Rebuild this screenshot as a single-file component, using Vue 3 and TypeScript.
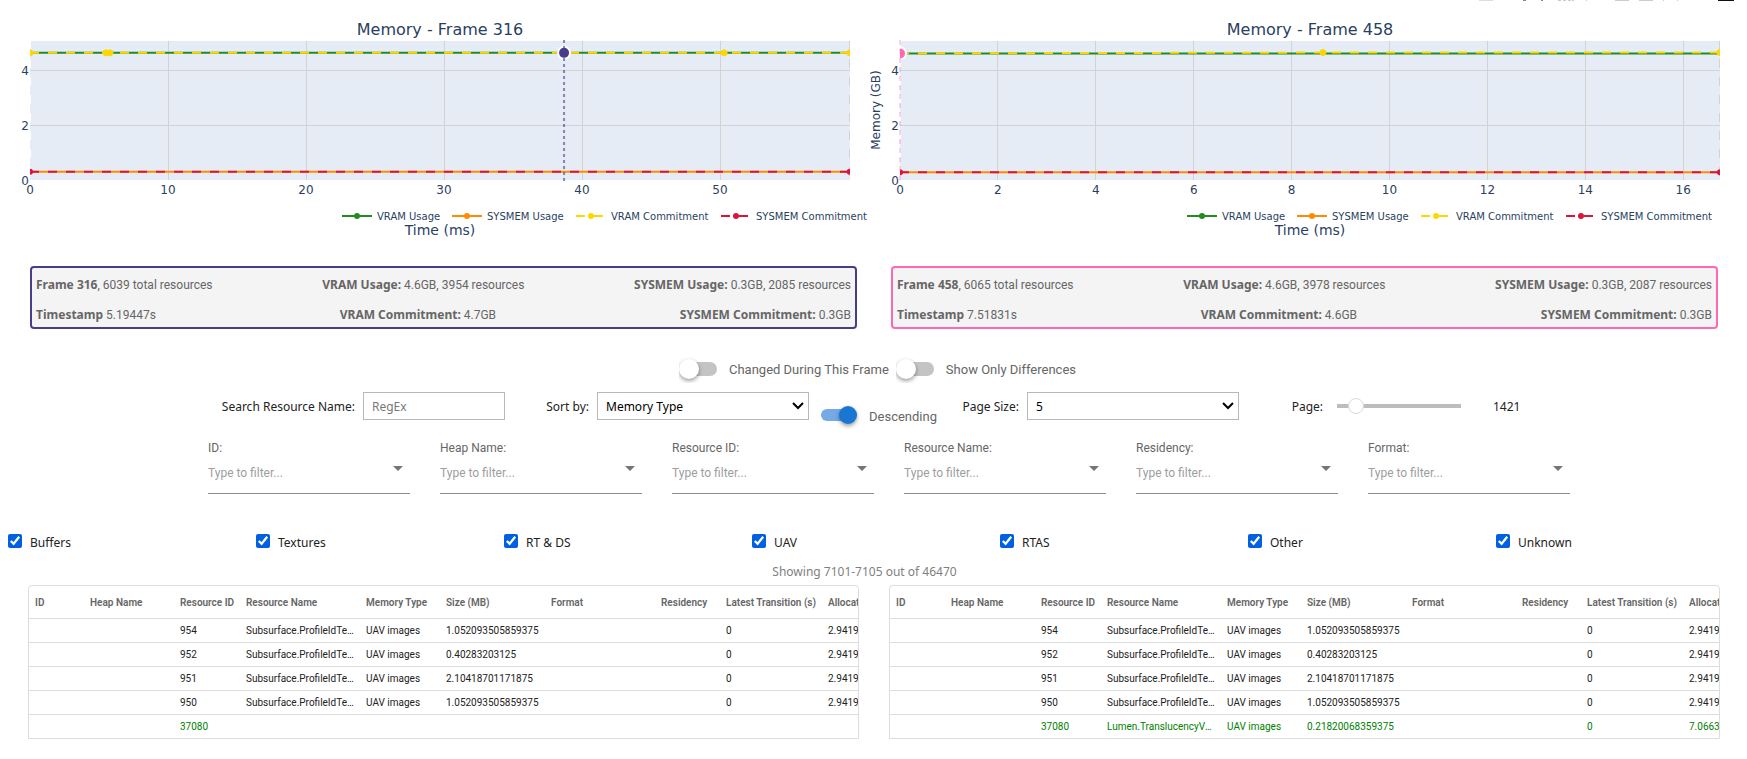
<script setup lang="ts">
import { ref } from 'vue'

interface Chart {
  id: string
  title: string
  origin: number
  pxPerUnit: number
  ticks: number[]
  span: number
  vram: [number, number]
  sysmem: number
  commitPoints: number[]
  selected: number
  color: string
  dash: string
  showYTitle: boolean
  legendX: number
}

const PLOT = { left: 30, right: 850, top: 41, bottom: 180 }
const yOf = (gb: number) => PLOT.bottom - gb * 27.4

const charts: Chart[] = [
  {
    id: 'left', title: 'Memory - Frame 316', origin: 30, pxPerUnit: 13.8, span: 59.4,
    ticks: [0, 10, 20, 30, 40, 50], vram: [4.64, 4.64], sysmem: 0.3,
    commitPoints: [0, 5.5, 5.8, 50.3, 59.4], selected: 38.7,
    color: '#483d8b', dash: '3 3', showYTitle: false, legendX: 342,
  },
  {
    id: 'right', title: 'Memory - Frame 458', origin: 30, pxPerUnit: 48.95, span: 16.75,
    ticks: [0, 2, 4, 6, 8, 10, 12, 14, 16], vram: [4.62, 4.65], sysmem: 0.28,
    commitPoints: [8.64, 16.75], selected: 0,
    color: '#ff69b4', dash: '5 4', showYTitle: true, legendX: 317,
  },
]
const xOf = (c: Chart, v: number) => c.origin + v * c.pxPerUnit
const commitY = (c: Chart, v: number) =>
  yOf(c.vram[0] + (c.vram[1] - c.vram[0]) * Math.min(1, v / (c.span * 0.5)))

const legend = [
  { label: 'VRAM Usage', color: '#228b22', dx: 0, dashed: false },
  { label: 'SYSMEM Usage', color: '#ff8c00', dx: 110, dashed: false },
  { label: 'VRAM Commitment', color: '#ffd700', dx: 234, dashed: true },
  { label: 'SYSMEM Commitment', color: '#dc143c', dx: 379, dashed: true },
]

const frames = [
  {
    cls: 'frame-a', no: '316', total: '6039', vram: '4.6GB, 3954 resources', sys: '0.3GB, 2085 resources',
    ts: '5.19447s', vramC: '4.7GB', sysC: '0.3GB',
  },
  {
    cls: 'frame-b', no: '458', total: '6065', vram: '4.6GB, 3978 resources', sys: '0.3GB, 2087 resources',
    ts: '7.51831s', vramC: '4.6GB', sysC: '0.3GB',
  },
]

const changed = ref(false)
const onlyDiff = ref(false)
const descending = ref(true)
const search = ref('')
const sortBy = ref('Memory Type')
const pageSize = ref('5')
const page = ref(1421)

const filters = ['ID', 'Heap Name', 'Resource ID', 'Resource Name', 'Residency', 'Format']
const kinds = ref(
  ['Buffers', 'Textures', 'RT & DS', 'UAV', 'RTAS', 'Other', 'Unknown'].map((name) => ({ name, on: true })),
)

const columns = [
  'ID', 'Heap Name', 'Resource ID', 'Resource Name', 'Memory Type', 'Size (MB)',
  'Format', 'Residency', 'Latest Transition (s)', 'Allocation Time (s)',
]
interface Row { cells: string[]; added?: boolean }
const profile = (id: string, size: string): Row => ({
  cells: ['', '', id, 'Subsurface.ProfileIdTexture', 'UAV images', size, '', '', '0', '2.94190'],
})
const common: Row[] = [
  profile('954', '1.052093505859375'),
  profile('952', '0.40283203125'),
  profile('951', '2.10418701171875'),
  profile('950', '1.052093505859375'),
]
const tables: Row[][] = [
  [...common, { added: true, cells: ['', '', '37080', '', '', '', '', '', '', ''] }],
  [...common, {
    added: true,
    cells: ['', '', '37080', 'Lumen.TranslucencyVolume', 'UAV images', '0.21820068359375', '', '', '0', '7.06630'],
  }],
]
</script>

<template>
  <main class="page">
    <section class="charts">
      <svg v-for="c in charts" :key="c.id" class="chart" viewBox="0 0 870 250" role="img" :aria-label="c.title">
        <defs>
          <clipPath :id="`plot-${c.id}`">
            <rect :x="PLOT.left" y="30" :width="PLOT.right - PLOT.left" height="150" />
          </clipPath>
        </defs>
        <rect :x="PLOT.left" :y="PLOT.top" :width="PLOT.right - PLOT.left" :height="PLOT.bottom - PLOT.top" fill="#e5ecf6" />
        <g class="grid">
          <line v-for="t in c.ticks.slice(1)" :key="t" :x1="xOf(c, t)" :x2="xOf(c, t)" :y1="PLOT.top" :y2="PLOT.bottom" />
          <line v-for="g in [2, 4]" :key="`g${g}`" :x1="PLOT.left" :x2="PLOT.right" :y1="yOf(g)" :y2="yOf(g)" />
        </g>

        <g :clip-path="`url(#plot-${c.id})`" fill="none" stroke-width="2">
          <line :x1="PLOT.left" :x2="PLOT.left" :y1="PLOT.top" :y2="PLOT.bottom" stroke="#fff" stroke-dasharray="9 9" />
          <line :x1="PLOT.right" :x2="PLOT.right" :y1="PLOT.top" :y2="PLOT.bottom" stroke="#d3d3d3" stroke-dasharray="9 9" />
          <line :x1="PLOT.left" :x2="PLOT.right" :y1="yOf(c.vram[0])" :y2="yOf(c.vram[0])" stroke="#228b22" />
          <line :x1="PLOT.left" :x2="PLOT.right" :y1="yOf(c.sysmem)" :y2="yOf(c.sysmem)" stroke="#ff8c00" />
          <polyline
            :points="`${PLOT.left},${yOf(c.vram[0])} ${xOf(c, c.span / 2)},${yOf(c.vram[1])} ${PLOT.right},${yOf(c.vram[1])}`"
            stroke="#ffd700" stroke-dasharray="9 9"
          />
          <line :x1="PLOT.left" :x2="PLOT.right" :y1="yOf(c.sysmem)" :y2="yOf(c.sysmem)" stroke="#dc143c" stroke-dasharray="9 9" />
          <circle v-for="p in c.commitPoints" :key="p" :cx="xOf(c, p)" :cy="commitY(c, p)" r="3" fill="#ffd700" stroke="#ffd700" stroke-width="1" />
          <circle v-for="p in [0, c.span]" :key="`s${p}`" :cx="xOf(c, p)" :cy="yOf(c.sysmem)" r="3" fill="#dc143c" />
          <circle :cx="xOf(c, c.selected)" :cy="yOf(c.vram[0])" r="6" :fill="c.color" stroke="#fff" />
        </g>
        <line
          :x1="xOf(c, c.selected)" :x2="xOf(c, c.selected)" y1="40" y2="181"
          :stroke="c.color" :stroke-width="c.selected ? 2 : 1" :stroke-dasharray="c.dash" opacity="0.6"
        />

        <g class="label">
          <text x="440" y="35" font-size="16" text-anchor="middle">{{ c.title }}</text>
          <text v-for="t in c.ticks" :key="t" :x="xOf(c, t)" y="194" font-size="12" text-anchor="middle">{{ t }}</text>
          <text v-for="t in [0, 2, 4]" :key="`y${t}`" x="29" :y="yOf(t) + 5" font-size="12" text-anchor="end">{{ t }}</text>
          <text v-if="c.showYTitle" transform="translate(10 110) rotate(-90)" font-size="12" text-anchor="middle">Memory (GB)</text>
          <text x="440" y="235" font-size="14" text-anchor="middle">Time (ms)</text>
          <g v-for="l in legend" :key="l.label" :transform="`translate(${c.legendX + l.dx} 216)`">
            <line x2="30" :stroke="l.color" stroke-width="2" :stroke-dasharray="l.dashed ? '9 9' : undefined" />
            <circle cx="15" r="3" :fill="l.color" />
            <text x="35" y="4" font-size="10">{{ l.label }}</text>
          </g>
        </g>
      </svg>
      <svg class="toolbar-edge" viewBox="0 0 260 1" aria-hidden="true">
        <path d="M0 0h14v1h-14z" fill="#ddd" />
        <path d="M44 0h3v1h-3z M62 0h2v1h-2z" fill="#888" />
        <path d="M79 0h3v1h-3z M84 0h3v1h-3z M89 0h3v1h-3z M93 0h2v1h-2z M107 0h1v1h-1z" fill="#ccc" />
        <path d="M136 0h14v1h-14z M160 0h14v1h-14z M184 0h1v1h-1z M198 0h1v1h-1z" fill="#ccc" />
        <path d="M239 0h16v1h-16z" fill="#111" />
      </svg>
    </section>

    <section class="pair summaries">
      <div v-for="f in frames" :key="f.no" class="summary" :class="f.cls">
        <div class="summary-row">
          <span><b>Frame {{ f.no }}</b>, {{ f.total }} total resources</span>
          <span><b>VRAM Usage:</b> {{ f.vram }}</span>
          <span><b>SYSMEM Usage:</b> {{ f.sys }}</span>
        </div>
        <div class="summary-row">
          <span><b>Timestamp</b> {{ f.ts }}</span>
          <span><b>VRAM Commitment:</b> {{ f.vramC }}</span>
          <span><b>SYSMEM Commitment:</b> {{ f.sysC }}</span>
        </div>
      </div>
    </section>

    <section class="toggles">
      <label class="switch"><input v-model="changed" type="checkbox" role="switch" /><span>Changed During This Frame</span></label>
      <label class="switch"><input v-model="onlyDiff" type="checkbox" role="switch" /><span>Show Only Differences</span></label>
    </section>

    <section class="controls">
      <label class="caption search-caption" for="search">Search Resource Name:</label>
      <input id="search" v-model="search" class="box search" type="text" placeholder="RegEx" />
      <label class="caption sort-caption" for="sort">Sort by:</label>
      <span class="select">
        <select id="sort" v-model="sortBy" class="box">
          <option>Memory Type</option>
          <option>Resource Name</option>
          <option>Size (MB)</option>
        </select>
        <svg viewBox="0 0 12 8" aria-hidden="true"><path d="M1 1l5 5 5-5" /></svg>
      </span>
      <label class="switch order"><input v-model="descending" type="checkbox" role="switch" /><span>Descending</span></label>
      <label class="caption size-caption" for="size">Page Size:</label>
      <span class="select">
        <select id="size" v-model="pageSize" class="box">
          <option>5</option>
          <option>10</option>
          <option>20</option>
        </select>
        <svg viewBox="0 0 12 8" aria-hidden="true"><path d="M1 1l5 5 5-5" /></svg>
      </span>
      <label class="caption page-caption" for="page">Page:</label>
      <input id="page" v-model.number="page" class="slider" type="range" min="0" max="9294" />
      <output class="caption" for="page">{{ page }}</output>
    </section>

    <section class="filters">
      <div v-for="(f, i) in filters" :key="f" class="filter">
        <label :for="`filter-${i}`">{{ f }}:</label>
        <div class="combo">
          <input :id="`filter-${i}`" type="text" placeholder="Type to filter..." />
          <svg viewBox="0 0 10 5" aria-hidden="true"><path d="M0 0h10l-5 5z" /></svg>
        </div>
      </div>
    </section>

    <section class="kinds">
      <label v-for="k in kinds" :key="k.name"><input v-model="k.on" type="checkbox" /><span>{{ k.name }}</span></label>
    </section>

    <p class="count">Showing 7101-7105 out of 46470</p>

    <section class="pair">
      <div v-for="(rows, i) in tables" :key="i" class="table-wrap">
        <table>
          <colgroup><col v-for="(c, n) in columns" :key="c" :class="`col-${n}`" /></colgroup>
          <thead>
            <tr><th v-for="c in columns" :key="c" scope="col">{{ c }}</th></tr>
          </thead>
          <tbody>
            <tr v-for="(r, n) in rows" :key="n" :class="{ added: r.added }">
              <td v-for="(cell, m) in r.cells" :key="m">{{ cell }}</td>
            </tr>
          </tbody>
        </table>
      </div>
    </section>
  </main>
</template>

<style>
body {
  margin: 0;
  background: #fff;
}
</style>

<style scoped>
* {
  box-sizing: border-box;
}
.page {
  font-family: "Noto Sans", "Segoe UI", sans-serif;
  font-size: 12px;
  color: #222;
  overflow: hidden;
}
.charts {
  display: grid;
  grid-template-columns: 1fr 1fr;
  padding-right: 7px;
  position: relative;
}
.chart {
  display: block;
  width: 100%;
}
.grid line {
  stroke: #d3d3d3;
  shape-rendering: crispEdges;
}
.label text {
  font-family: "DejaVu Sans", Verdana, sans-serif;
  fill: #2a3f5f;
}
.toolbar-edge {
  position: absolute;
  top: 0;
  right: 8px;
  width: 260px;
  height: 1px;
}
.pair {
  display: grid;
  grid-template-columns: 1fr 1fr;
  gap: 30px;
  margin: 0 27px 0 28px;
}
.summaries {
  gap: 34px;
  margin: 16px 29px 0 30px;
}
.summary {
  height: 63px;
  padding: 2px 4px;
  border: 2px solid;
  border-radius: 4px;
  background: #f4f4f4;
  font-family: Roboto, sans-serif;
}
.summary b {
  font-family: "Noto Sans", "Segoe UI", sans-serif;
}
.frame-a {
  border-color: #483d8b;
}
.frame-b {
  border-color: #ff69b4;
}
.summary-row {
  display: flex;
  justify-content: space-between;
  line-height: 29px;
  color: #666;
  white-space: nowrap;
}
.toggles {
  display: flex;
  justify-content: center;
  gap: 7px;
  margin-top: 26px;
  padding-left: 8px;
}
.switch {
  display: flex;
  align-items: center;
  gap: 12px;
  font: 13px/28px Roboto, sans-serif;
  color: #666;
  white-space: nowrap;
}
.switch span {
  padding-top: 2px;
  line-height: 26px;
}
.switch input {
  appearance: none;
  position: relative;
  flex: none;
  width: 38px;
  height: 28px;
  margin: 0;
  overflow: hidden;
}
.switch input::before {
  content: "";
  position: absolute;
  left: 4px;
  right: 0;
  top: 7px;
  height: 14px;
  border-radius: 7px;
  background: #c4c4c4;
}
.switch input::after {
  content: "";
  position: absolute;
  left: 0;
  top: 4px;
  width: 20px;
  height: 20px;
  border-radius: 50%;
  background: #fff;
  box-shadow: 0 2px 4px rgba(0, 0, 0, 0.4);
}
.switch input:checked::before {
  left: 0;
  right: 4px;
  top: 7px;
  height: 12px;
  background: #75aae5;
}
.switch input:checked::after {
  left: 18px;
  top: 4px;
  width: 18px;
  height: 18px;
  background: #1976d2;
}
.controls {
  display: flex;
  align-items: flex-start;
  margin: 9px 24px 0 220px;
}
.caption {
  flex: none;
  line-height: 29px;
  font-size: 12px;
  white-space: nowrap;
  text-align: right;
}
.search-caption {
  width: 135px;
  margin-right: 8px;
}
.sort-caption {
  width: 84px;
  margin-right: 8px;
}
.size-caption {
  width: 83px;
  margin-right: 8px;
}
.page-caption {
  width: 84px;
  margin-right: 6px;
}
.box {
  height: 28px;
  width: 100%;
  padding: 0 8px;
  border: 1px solid #b8b8b8;
  border-radius: 0;
  background: #fff;
  color: #000;
  font: inherit;
}
.search {
  flex: 0 1 142px;
  min-width: 0;
}
.search::placeholder {
  color: #777;
}
.select {
  position: relative;
  flex: 0 1 212px;
}
.select select {
  appearance: none;
  display: block;
}
.select svg {
  position: absolute;
  right: 5px;
  top: 10px;
  width: 12px;
  height: 8px;
  fill: none;
  stroke: #000;
  stroke-width: 2;
  pointer-events: none;
}
.order {
  gap: 10px;
  margin: 10px 0 0 12px;
  width: 115px;
}
.slider {
  appearance: none;
  flex: 0 1 140px;
  min-width: 0;
  height: 28px;
  margin: 0 24px 0 0;
  background: none;
}
.slider::-webkit-slider-runnable-track {
  height: 16px;
  background: linear-gradient(#bdbdbd, #bdbdbd) center / calc(100% - 16px) 4px no-repeat;
}
.slider::-webkit-slider-thumb {
  appearance: none;
  width: 16px;
  height: 16px;
  border: 1px solid #d9d9d9;
  border-radius: 50%;
  background: #fff;
}
.filters {
  display: grid;
  grid-template-columns: repeat(6, 1fr);
  gap: 30px;
  margin: 10px 177px 0 208px;
  font-family: Roboto, sans-serif;
}
.filter label {
  display: block;
  font-size: 12px;
  line-height: 16px;
  color: #666;
}
.combo {
  position: relative;
  border-bottom: 1px solid #8c8c8c;
}
.combo input {
  display: block;
  width: 100%;
  height: 37px;
  padding: 0 24px 4px 0;
  border: 0;
  outline: 0;
  font: 12px/16px Roboto, sans-serif;
}
.combo input::placeholder {
  color: #9e9e9e;
}
.combo svg {
  position: absolute;
  right: 7px;
  top: 10px;
  width: 10px;
  height: 5px;
  fill: #757575;
}
.kinds {
  display: grid;
  grid-template-columns: repeat(7, 1fr);
  margin: 32px 3px 0 8px;
}
.kinds label {
  display: flex;
  align-items: flex-start;
  gap: 8px;
  height: 32px;
  line-height: 34px;
}
.kinds input {
  width: 14px;
  height: 14px;
  margin: 8px 0 0;
  accent-color: #0060df;
}
.count {
  margin: 4px 0 3px;
  padding-right: 18px;
  line-height: 20px;
  text-align: center;
  color: #808080;
}
.table-wrap {
  overflow: hidden;
  border: 1px solid #ddd;
  border-radius: 4px 4px 0 0;
}
table {
  width: 900px;
  table-layout: fixed;
  border-collapse: collapse;
  font: 10px/24px Roboto, sans-serif;
}
.col-0 { width: 55px; }
.col-1 { width: 90px; }
.col-2 { width: 66px; }
.col-3 { width: 120px; }
.col-4 { width: 80px; }
.col-5 { width: 105px; }
.col-6 { width: 110px; }
.col-7 { width: 65px; }
.col-8 { width: 102px; }
.col-9 { width: 107px; }
th,
td {
  height: 24px;
  padding: 2px 6px 0;
  overflow: hidden;
  text-align: left;
  text-overflow: ellipsis;
  white-space: nowrap;
  border-bottom: 1px solid #ddd;
  line-height: 20px;
}
th {
  height: 32px;
  padding-right: 0;
  font-weight: 600;
  color: #666;
  text-overflow: clip;
}
tbody tr:last-child td {
  border-bottom: 0;
}
.added {
  color: #008000;
}
</style>
